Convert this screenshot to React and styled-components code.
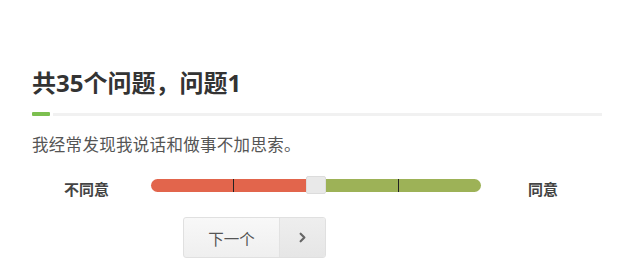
import React from "react";
import styled, { createGlobalStyle } from "styled-components";
import { ChevronRight } from "lucide-react";

const Global = createGlobalStyle`
  html, body { margin: 0; padding: 0; background: #fff; }
  body { font-family: "Open Sans", "Noto Sans CJK SC", sans-serif; }
`;

const Page = styled.div`
  width: 642px;
  height: 278px;
  box-sizing: border-box;
  padding: 66px 40px 0 32px;
  overflow: hidden;
`;

const Title = styled.h1`
  margin: 0;
  font-size: 24px;
  line-height: 34px;
  font-weight: 700;
  color: #333;
  font-family: "Open Sans", "Noto Sans CJK SC", sans-serif;
`;

const Rule = styled.div`
  display: flex;
  align-items: center;
  gap: 3px;
  margin-top: 12px;
  width: 570px;
`;

const RuleMark = styled.div`
  width: 18px;
  height: 4px;
  border-radius: 1px;
  background: #7cbf4f;
`;

const RuleLine = styled.div`
  flex: 1;
  height: 3px;
  background: #f1f1f1;
`;

const Question = styled.p`
  margin: 18px 0 0;
  font-size: 16.5px;
  line-height: 20px;
  letter-spacing: 0.3px;
  color: #555;
  font-family: "Noto Sans CJK SC", sans-serif;
`;

const ScaleRow = styled.div`
  display: flex;
  align-items: center;
  margin-top: 19px;
  padding-left: 32px;
  height: 24px;
`;

const ScaleLabel = styled.span`
  width: ${(p) => p.$w}px;
  font-size: 15px;
  font-weight: 700;
  color: #444;
  font-family: "Noto Sans CJK SC", sans-serif;
  padding-top: 6px;
`;

const Track = styled.div`
  position: relative;
  display: flex;
  align-items: center;
  width: 330px;
  height: 13px;
  margin-right: 47px;
`;

const Segment = styled.div`
  height: 13px;
  width: ${(p) => p.$w}px;
  background: ${(p) => p.$c};
  border-radius: ${(p) => p.$r};
`;

const Handle = styled.div`
  width: 18px;
  height: 16px;
  background: #e9e9e9;
  border: 1px solid #dcdcdc;
  border-radius: 2px;
`;

const Tick = styled.div`
  position: absolute;
  top: 0;
  width: 1px;
  height: 13px;
  background: #222;
`;

const ButtonGroup = styled.div`
  display: flex;
  margin: 20px 0 0 151px;
  width: 143px;
  height: 41px;
  box-sizing: border-box;
  border: 1px solid #e0e0e0;
  border-radius: 3px;
  overflow: hidden;
  background: linear-gradient(#f8f8f8, #efefef);
`;

const NextText = styled.div`
  width: 95px;
  display: flex;
  align-items: center;
  justify-content: center;
  font-size: 15.5px;
  color: #555;
  font-family: "Noto Sans CJK SC", sans-serif;
  border-right: 1px solid #e2e2e2;
`;

const NextArrow = styled.div`
  flex: 1;
  display: flex;
  align-items: center;
  justify-content: center;
  background: linear-gradient(#eeeeee, #e6e6e6);
  color: #666;
`;

export default function App() {
  return (
    <>
      <Global />
      <Page>
        <Title>共35个问题，问题1</Title>
        <Rule>
          <RuleMark />
          <RuleLine />
        </Rule>
        <Question>我经常发现我说话和做事不加思索。</Question>
        <ScaleRow>
          <ScaleLabel $w={87}>不同意</ScaleLabel>
          <Track>
            <Segment $w={155} $c="#e2654c" $r="7px 0 0 7px" />
            <Handle />
            <Segment $w={155} $c="#9db257" $r="0 7px 7px 0" />
            <Tick style={{ left: 82 }} />
            <Tick style={{ left: 247 }} />
          </Track>
          <ScaleLabel $w={50}>同意</ScaleLabel>
        </ScaleRow>
        <ButtonGroup>
          <NextText>下一个</NextText>
          <NextArrow>
            <ChevronRight size={15} strokeWidth={3.5} />
          </NextArrow>
        </ButtonGroup>
      </Page>
    </>
  );
}
